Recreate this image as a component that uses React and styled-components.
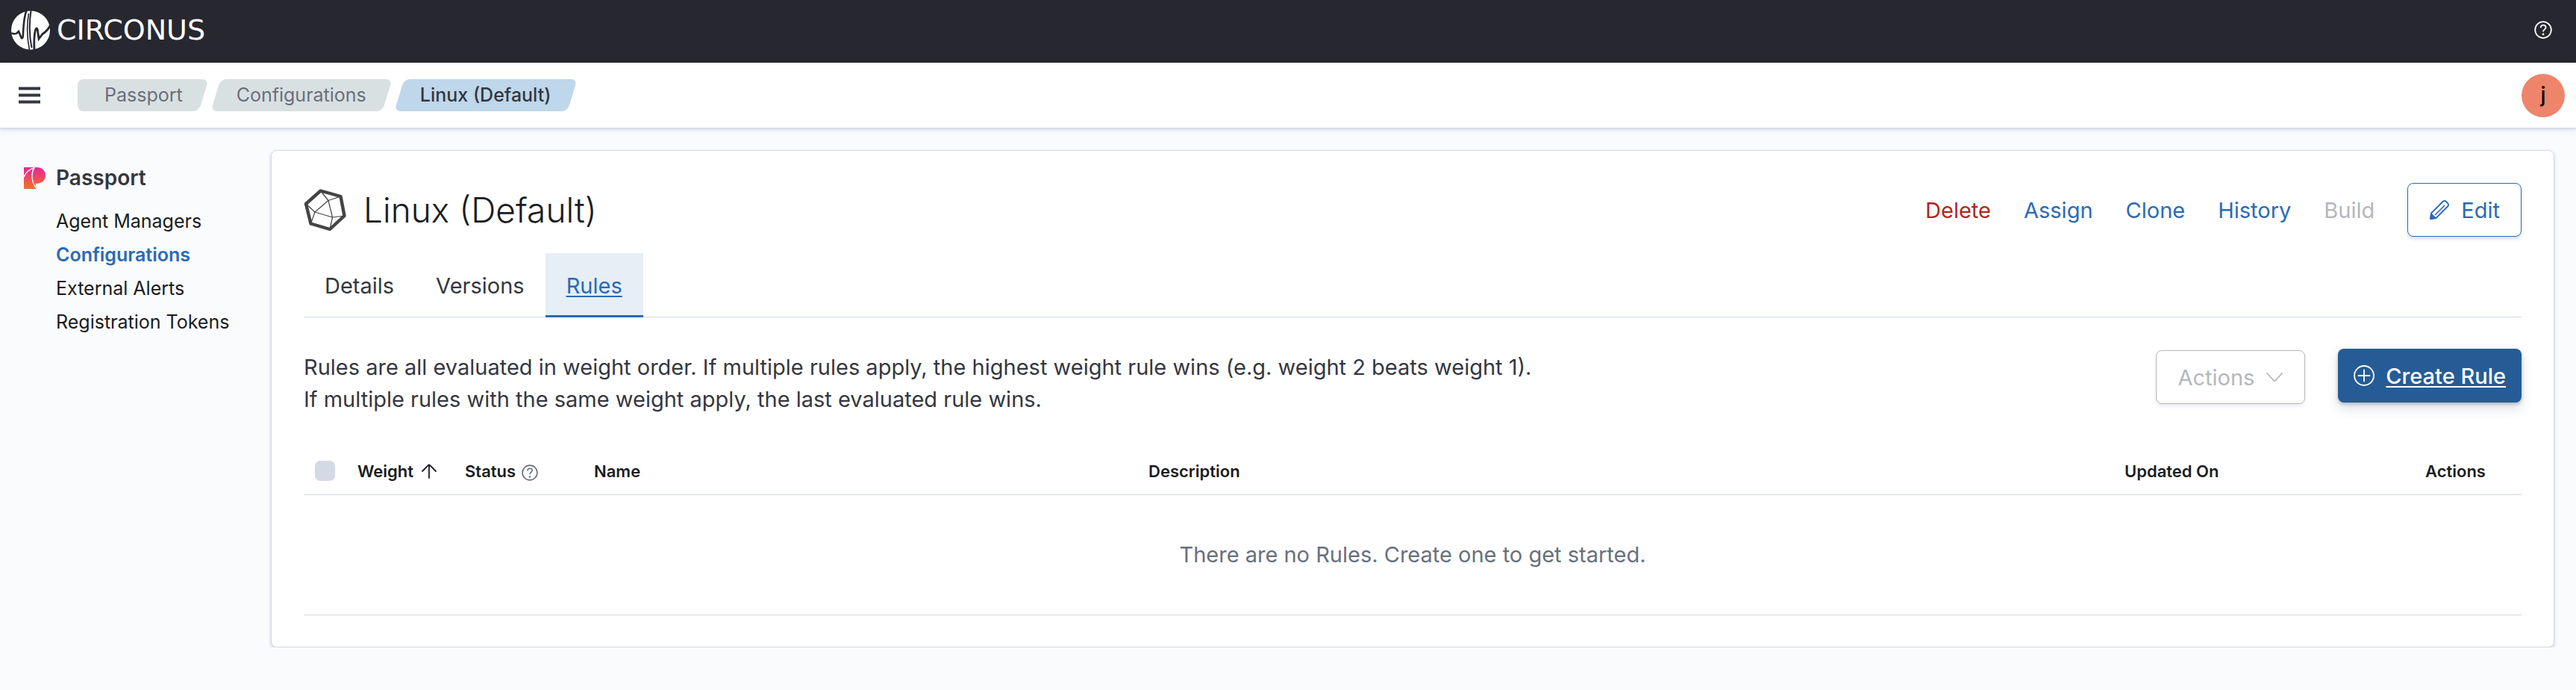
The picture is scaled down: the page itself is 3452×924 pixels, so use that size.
import React from 'react';
import styled, { createGlobalStyle, css } from 'styled-components';

const Global = createGlobalStyle`
  *, *::before, *::after { box-sizing: border-box; }
  html { min-height: 100%; background: #fafbfd; }
  body {
    margin: 0; color: #343741;
    font-family: Inter, "Liberation Sans", sans-serif; font-size: 29px; line-height: 43px;
  }
  button { font: inherit; cursor: pointer; }
  a { color: inherit; text-decoration: none; }
`;

const TopBar = styled.header`
  display: flex; align-items: center; justify-content: space-between;
  height: 84px; padding: 0 32px 4px 15px; background: #27282f; color: #fff;
`;
const Brand = styled.a`
  display: flex; align-items: center; gap: 8px;
  font-family: "DejaVu Sans", sans-serif; font-size: 38px; line-height: 40px;
`;
const BareButton = styled.button`
  display: flex; padding: 0; border: 0; background: none; color: inherit;
`;
const SubBar = styled.div`
  display: flex; align-items: center; position: relative;
  height: 87px; padding: 0 15px 0 25px; background: #fff; color: #343741;
  box-shadow: 0 1px 0 #d3dae6, 0 2px 4px rgba(60, 70, 130, 0.2), 0 4px 12px rgba(60, 70, 130, 0.06);
`;
const Crumbs = styled.nav`
  flex: 1; margin-left: 50px;
  ol { display: flex; gap: 16px; margin: 0; padding: 0; list-style: none; }
`;
const Crumb = styled.a`
  display: block; position: relative; z-index: 0;
  padding: 0 28px; font-size: 25px; line-height: 43px;
  color: #69707d; --fill: #d9e0e2;
  &::before {
    content: ''; position: absolute; z-index: -1; inset: 0;
    border-radius: 8px; background: var(--fill); transform: skewX(-17deg);
  }
  ${p => p.$first && css`
    padding-left: 36px;
    &::before { left: 20px; }
    &::after {
      content: ''; position: absolute; z-index: -1; inset: 0 28px 0 0;
      border-radius: 8px; background: var(--fill);
    }
  `}
  ${p => p.$current && css`--fill: #bfd7ea; color: #343741; font-weight: 500;`}
`;
const Avatar = styled.button`
  width: 58px; height: 58px; padding: 0; border: 0; border-radius: 50%;
  background: #ee856b; color: #000; font-size: 28px; font-weight: 500;
`;
const Page = styled.div`
  display: flex; align-items: flex-start;
`;
const Sidebar = styled.nav`
  flex: 0 0 363px; padding: 46px 0 0 32px;
`;
const SideHeading = styled.a`
  display: flex; align-items: center; gap: 14px;
  font-size: 28px; font-weight: 600; line-height: 43px;
`;
const SideList = styled.ul`
  margin: 14px 0 0; padding: 0 0 0 43px; list-style: none;
`;
const SideLink = styled.a`
  display: block; font-size: 25px; line-height: 45px;
  color: ${p => (p.$active ? '#2b6ab5' : '#1a1c21')};
  font-weight: ${p => (p.$active ? 600 : 400)};
`;
const Panel = styled.main`
  flex: 1; min-width: 0; margin: 30px 29px 0 0; padding: 43px 43px 42px;
  border: 1px solid #d3dae6; border-radius: 8px; background: #fff;
  box-shadow: 0 2px 4px rgba(60, 70, 130, 0.24);
`;
const TitleRow = styled.div`
  display: flex; align-items: center; justify-content: space-between;
`;
const Title = styled.h1`
  display: flex; align-items: center; gap: 23px; margin: 0;
  font-size: 46px; line-height: 72px; font-weight: 300; color: #1a1c21;
`;
const ActionGroup = styled.div`
  display: flex; align-items: center; gap: ${p => p.$gap}px;
`;
const TextButton = styled.button`
  padding: 0; border: 0; background: none;
  color: ${p => (p.$danger ? '#b4251d' : '#2b6ab5')};
  &:disabled { color: #b4b7bc; cursor: default; }
`;
const button = css`
  display: flex; align-items: center; height: 72px; border-radius: 8px;
`;
const OutlineButton = styled.button`
  ${button}
  gap: 15px; padding: 0 28px; background: #fff;
  border: 1px solid currentColor; color: #2b6ab5;
  box-shadow: 0 3px 4px rgba(43, 90, 150, 0.2);
  &:disabled { color: #b4b7bc; cursor: default; box-shadow: 0 3px 4px rgba(60, 70, 130, 0.1); }
`;
const PrimaryButton = styled.a`
  ${button}
  gap: 15px; padding: 0 21px; background: #265c96; color: #fff; font-weight: 500;
  transform: translateY(-2px);
  box-shadow: 0 2px 4px rgba(40, 60, 100, 0.3), 0 8px 16px rgba(40, 60, 100, 0.16);
  span { text-decoration: underline; text-decoration-thickness: 2px; text-underline-offset: 3px; }
`;
const Tabs = styled.nav`
  display: flex; margin-top: 22px; box-shadow: inset 0 -1px #d3dae6;
`;
const Tab = styled.a`
  padding: 2px 28px 0; line-height: 84px;
  ${p => p.$active && css`
    background: #e6eef6; color: #2b6ab5; box-shadow: inset 0 -3px #2b6ab5;
    text-decoration: underline; text-decoration-thickness: 2px; text-underline-offset: 3px;
  `}
`;
const Intro = styled.div`
  display: flex; align-items: flex-start; justify-content: space-between; margin-top: 44px;
  p { margin: 0; padding-top: 1px; }
`;
const Table = styled.table`
  width: 100%; margin-top: 42px; border-collapse: collapse; table-layout: fixed;
  th {
    height: 64px; padding: 2px 0 0; text-align: left; border-bottom: 1px solid #d3dae6;
    font-size: 22px; line-height: 32px; font-weight: 600; color: #1a1c21;
  }
  td {
    height: 161px; padding: 0; text-align: center;
    border-bottom: 1px solid #d3dae6; color: #69707d;
  }
`;
const Check = styled.input`
  appearance: none; display: block; width: 27px; height: 27px; margin: 0 0 0 15px;
  border-radius: 7px; background: #d3dae6;
`;
const SortButton = styled(BareButton)`
  align-items: center; gap: 11px;
`;
const Labelled = styled.span`
  display: flex; align-items: center; gap: 8px;
  svg { color: #69707d; margin-top: 4px; }
`;

const Logo = () => (
  <svg width="53" height="53" viewBox="0 0 53 53" aria-hidden="true">
    <circle cx="26" cy="26.500" r="26" fill="#fff" />
    <g fill="none" stroke="#27282f">
      <path d="M0 30.500C3 31.500 5 32 7.500 30.500L10 28L13.500 36.500C14.500 38 15.500 37 15.800 34C16.500 22 16.500 10 20.500 0" strokeWidth="2.600" />
      <path d="M23.500 4C21 18 21 36 24.500 53" strokeWidth="1.600" />
      <path d="M26.500 0C24 17 24 34 27.500 50" strokeWidth="2" />
      <path d="M31 53C30.500 44 30.500 34 32.500 26C33.500 23 35 23.500 35.300 26L37 38L42 31.500C46 29 50 25 53 19" strokeWidth="2.800" />
    </g>
  </svg>
);
const HelpIcon = ({ size = 24 }) => (
  <svg width={size} height={size} viewBox="0 0 24 24" fill="none" stroke="currentColor" strokeWidth="1.800" aria-hidden="true">
    <circle cx="12" cy="12" r="10.800" />
    <path d="M8.700 9.200C8.800 6.900 10.200 5.700 12.200 5.700C14.200 5.700 15.500 7 15.500 8.700C15.500 11.500 12 11.300 12 14.500" />
    <circle cx="12" cy="17.900" r="1.400" fill="currentColor" stroke="none" />
  </svg>
);
const MenuIcon = () => (
  <svg width="29" height="24" viewBox="0 0 29 24" fill="#343741" aria-hidden="true">
    <rect y="0.500" width="29" height="4" /><rect y="9.500" width="29" height="4" /><rect y="18.500" width="29" height="4" />
  </svg>
);
const PassportIcon = () => (
  <svg width="29" height="29" viewBox="0 0 29 29" aria-hidden="true">
    <defs>
      <linearGradient id="passport" x1="0" y1="0" x2="0" y2="1">
        <stop offset="0.100" stopColor="#ea2a8a" /><stop offset="0.900" stopColor="#ef6d34" />
      </linearGradient>
    </defs>
    <path d="M0 0H17C24 0 29 4.500 29 11C29 17.500 24 22 15.500 22L17 29H0Z" fill="url(#passport)" />
    <path d="M0 13C2.500 7 7 2.500 14.500 0.500M14 0.500C9.500 7.500 9.500 20 17.500 29" fill="none" stroke="#fafbfd" strokeWidth="1.400" />
  </svg>
);
const PolyIcon = () => (
  <svg width="57" height="57" viewBox="0 0 57 57" fill="none" stroke="#444" strokeLinejoin="round" aria-hidden="true">
    <path d="M22.500 2.500L49.500 10L54.500 36L35 54L9.500 46.500L3 20Z" strokeWidth="4.400" />
    <path d="M22.500 2.500L33 15.500L49.500 10M33 15.500L15 31L3 20M15 31L9.500 46.500M15 31L38.500 38L33 15.500M38.500 38L54.500 36M38.500 38L35 54" strokeWidth="1.200" />
  </svg>
);
const PencilIcon = () => (
  <svg width="28" height="28" viewBox="0 0 28 28" fill="none" stroke="currentColor" strokeWidth="1.800" strokeLinejoin="round" aria-hidden="true">
    <path d="M2 26L3 18.500L18.500 3C19.800 1.700 21.600 1.700 23 3L25 5C26.300 6.400 26.300 8.200 25 9.500L9.500 25Z" />
    <path d="M8 21L21 8" strokeWidth="1.600" />
    <path d="M2 26L3 19.500L8.500 25Z" fill="currentColor" />
  </svg>
);
const ChevronIcon = () => (
  <svg width="24" height="24" viewBox="0 0 24 24" fill="none" stroke="currentColor" strokeWidth="1.800" strokeLinecap="round" aria-hidden="true">
    <path d="M2 7L11 16.500Q12 17.500 13 16.500L22 7" />
  </svg>
);
const PlusIcon = () => (
  <svg width="28" height="28" viewBox="0 0 28 28" fill="none" stroke="currentColor" strokeWidth="1.800" strokeLinecap="round" aria-hidden="true">
    <circle cx="14" cy="14" r="13" /><path d="M14 6.500V21.500M6.500 14H21.500" />
  </svg>
);
const ArrowIcon = () => (
  <svg width="20" height="20" viewBox="0 0 20 20" fill="none" stroke="currentColor" strokeWidth="1.800" strokeLinecap="round" aria-hidden="true">
    <path d="M10 19V1.500M1 10L9.300 1.700Q10 1 10.700 1.700L19 10" />
  </svg>
);

const sideLinks = ['Agent Managers', 'Configurations', 'External Alerts', 'Registration Tokens'];

export default function App() {
  return (
    <>
      <Global />
      <TopBar>
        <Brand href="#"><Logo />CIRCONUS</Brand>
        <BareButton aria-label="Help"><HelpIcon /></BareButton>
      </TopBar>
      <SubBar>
        <BareButton aria-label="Menu"><MenuIcon /></BareButton>
        <Crumbs aria-label="Breadcrumbs">
          <ol>
            <li><Crumb href="#" $first>Passport</Crumb></li>
            <li><Crumb href="#">Configurations</Crumb></li>
            <li><Crumb href="#" $current aria-current="page">Linux (Default)</Crumb></li>
          </ol>
        </Crumbs>
        <Avatar>j</Avatar>
      </SubBar>
      <Page>
        <Sidebar aria-label="Passport">
          <SideHeading href="#"><PassportIcon />Passport</SideHeading>
          <SideList>
            {sideLinks.map(name => (
              <li key={name}><SideLink href="#" $active={name === 'Configurations'}>{name}</SideLink></li>
            ))}
          </SideList>
        </Sidebar>
        <Panel>
          <TitleRow>
            <Title><PolyIcon />Linux (Default)</Title>
            <ActionGroup $gap={44}>
              <TextButton $danger>Delete</TextButton>
              <TextButton>Assign</TextButton>
              <TextButton>Clone</TextButton>
              <TextButton>History</TextButton>
              <TextButton disabled>Build</TextButton>
              <OutlineButton><PencilIcon />Edit</OutlineButton>
            </ActionGroup>
          </TitleRow>
          <Tabs>
            <Tab href="#">Details</Tab>
            <Tab href="#">Versions</Tab>
            <Tab href="#" $active aria-current="page">Rules</Tab>
          </Tabs>
          <Intro>
            <p>
              Rules are all evaluated in weight order. If multiple rules apply, the highest weight rule wins (e.g. weight 2 beats weight 1).<br />
              If multiple rules with the same weight apply, the last evaluated rule wins.
            </p>
            <ActionGroup $gap={44}>
              <OutlineButton disabled>Actions<ChevronIcon /></OutlineButton>
              <PrimaryButton href="#"><PlusIcon /><span>Create Rule</span></PrimaryButton>
            </ActionGroup>
          </Intro>
          <Table>
            <colgroup>
              <col style={{ width: 72 }} /><col style={{ width: 144 }} /><col style={{ width: 173 }} />
              <col style={{ width: '25%' }} /><col /><col style={{ width: 403 }} /><col style={{ width: 129 }} />
            </colgroup>
            <thead>
              <tr>
                <th><Check type="checkbox" disabled aria-label="Select all rows" /></th>
                <th><SortButton>Weight<ArrowIcon /></SortButton></th>
                <th><Labelled>Status<HelpIcon size={22} /></Labelled></th>
                <th>Name</th>
                <th>Description</th>
                <th>Updated On</th>
                <th>Actions</th>
              </tr>
            </thead>
            <tbody>
              <tr><td colSpan={7}>There are no Rules. Create one to get started.</td></tr>
            </tbody>
          </Table>
        </Panel>
      </Page>
    </>
  );
}
